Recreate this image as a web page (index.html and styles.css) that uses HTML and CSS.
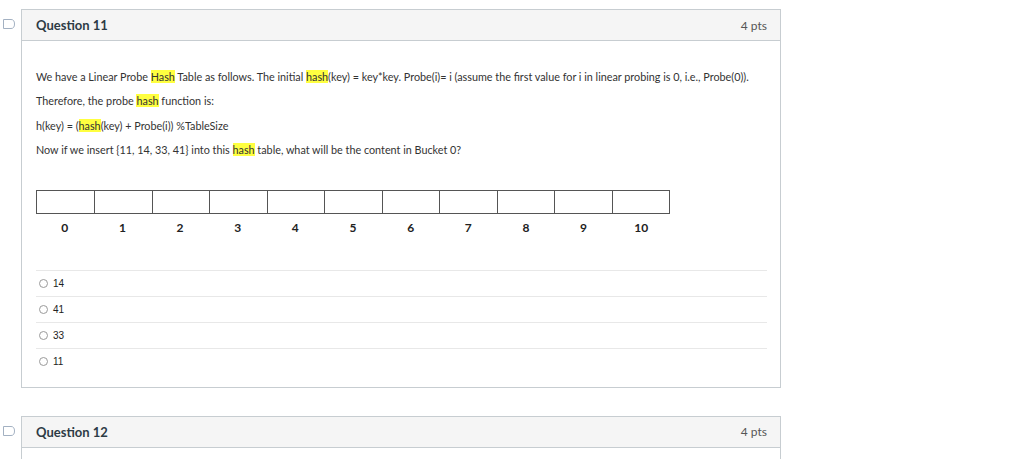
FILE: index.html
```html
<!DOCTYPE html>
<html>
<head>
<meta charset="utf-8">
<link rel="stylesheet" href="styles.css">
</head>
<body>
<div class="page">
  <div class="question">
    <svg class="flag" width="12" height="10" viewBox="0 0 12 10"><path d="M0.5 0.5 H8 Q11.5 0.5 11.5 5 Q11.5 9.5 8 9.5 H0.5 Z" fill="none" stroke="#a3b1c2" stroke-width="1"/></svg>
    <div class="q-header">
      <span class="q-title">Question 11</span>
      <span class="q-pts">4 pts</span>
    </div>
    <div class="q-body">
      <p>We have a Linear Probe <mark>Hash</mark> Table as follows. The initial <mark>hash</mark>(key) = key*key. Probe(i)= i (assume the first value for i in linear probing is 0, i.e., Probe(0)).</p>
      <p>Therefore, the probe <mark>hash</mark> function is:</p>
      <p>h(key) = (<mark>hash</mark>(key) + Probe(i)) %TableSize</p>
      <p>Now if we insert {11, 14, 33, 41} into this <mark>hash</mark> table, what will be the content in Bucket 0?</p>
      <div class="table-fig">
        <div class="cells">
          <div class="cell"></div><div class="cell"></div><div class="cell"></div><div class="cell"></div><div class="cell"></div><div class="cell"></div><div class="cell"></div><div class="cell"></div><div class="cell"></div><div class="cell"></div><div class="cell"></div>
        </div>
        <div class="labels">
          <span>0</span><span>1</span><span>2</span><span>3</span><span>4</span><span>5</span><span>6</span><span>7</span><span>8</span><span>9</span><span>10</span>
        </div>
      </div>
      <div class="answers">
        <label class="answer"><span class="radio"></span>14</label>
        <label class="answer"><span class="radio"></span>41</label>
        <label class="answer"><span class="radio"></span>33</label>
        <label class="answer"><span class="radio"></span>11</label>
      </div>
    </div>
  </div>
  <div class="question">
    <svg class="flag" width="12" height="10" viewBox="0 0 12 10"><path d="M0.5 0.5 H8 Q11.5 0.5 11.5 5 Q11.5 9.5 8 9.5 H0.5 Z" fill="none" stroke="#a3b1c2" stroke-width="1"/></svg>
    <div class="q-header">
      <span class="q-title">Question 12</span>
      <span class="q-pts">4 pts</span>
    </div>
    <div class="q-body short"></div>
  </div>
</div>
</body>
</html>
```
FILE: styles.css
```css
html, body {
  margin: 0;
  padding: 0;
  background: #ffffff;
}
body {
  font-family: Lato, "Open Sans", sans-serif;
  color: #333333;
  overflow: hidden;
  height: 459px;
}
.page {
  padding: 9px 0 0 21px;
}
.question {
  position: relative;
  width: 760px;
  box-sizing: border-box;
  border: 1px solid #c7cdd1;
  margin-bottom: 28px;
}
.flag {
  position: absolute;
  left: -19px;
  top: 9px;
}
.q-header {
  height: 30px;
  background: #f5f5f5;
  border-bottom: 1px solid #c7cdd1;
  display: flex;
  align-items: center;
  justify-content: space-between;
  padding: 0 13px 0 14px;
}
.q-title {
  font-size: 13px;
  font-weight: 700;
  color: #2d3b45;
}
.q-pts {
  font-size: 12px;
  color: #555555;
}
.q-body {
  padding: 29px 13px 13px 14px;
  font-size: 10.8px;
}
.q-body.short {
  padding: 0;
  height: 20px;
}
.q-body p {
  margin: 0 0 10px;
  line-height: 14.4px;
  white-space: nowrap;
}
mark {
  background: #ffff40;
  color: inherit;
}
.table-fig {
  margin-top: 32px;
  width: 634px;
}
.cells {
  display: grid;
  grid-template-columns: repeat(11, 1fr);
  border: 1px solid #555555;
  height: 22px;
}
.cell {
  border-left: 1px solid #555555;
}
.cell:first-child {
  border-left: none;
}
.labels {
  display: grid;
  grid-template-columns: repeat(11, 1fr);
  margin-top: 7px;
  font-size: 12px;
  font-weight: 700;
  color: #222222;
  line-height: 14px;
  text-align: center;
}
.answers {
  margin-top: 35px;
}
.answer {
  display: flex;
  align-items: center;
  height: 25px;
  border-top: 1px solid #e8e8e8;
  font-family: "Liberation Sans", Arial, sans-serif;
  font-size: 10px;
  color: #222222;
}
.radio {
  width: 9px;
  height: 9px;
  border: 1px solid #9a9a9a;
  border-radius: 50%;
  margin: 0 5px 0 3px;
  box-sizing: border-box;
  background: #fff;
}
```
